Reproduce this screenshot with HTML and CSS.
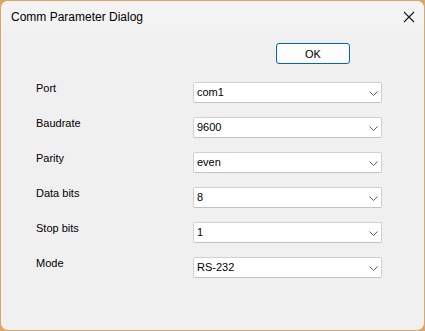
FILE: index.html
```html
<!doctype html>
<html>
<head>
    <title>Comm Parameter Dialog</title>
    <meta charset="utf-8"/>
    <link rel="stylesheet" href="styles.css">
</head>
<body>
    <div class="window">
        <div class="titlebar">
            <span class="title">Comm Parameter Dialog</span>
            <svg class="close" width="12" height="12" viewBox="0 0 12 12">
                <path d="M1 1 L11 11 M11 1 L1 11" stroke="#1a1a1a" stroke-width="1.1" fill="none"/>
            </svg>
        </div>
        <div class="content">
            <div class="okrow">
                <button class="ok">OK</button>
            </div>
            <div class="form">
                <label>Port</label>
                <div class="combo"><span>com1</span><svg class="chev" width="9" height="5" viewBox="0 0 9 5"><path d="M0.5 0.5 L4.5 4.5 L8.5 0.5" stroke="#606060" fill="none"/></svg></div>
                <label>Baudrate</label>
                <div class="combo"><span>9600</span><svg class="chev" width="9" height="5" viewBox="0 0 9 5"><path d="M0.5 0.5 L4.5 4.5 L8.5 0.5" stroke="#606060" fill="none"/></svg></div>
                <label>Parity</label>
                <div class="combo"><span>even</span><svg class="chev" width="9" height="5" viewBox="0 0 9 5"><path d="M0.5 0.5 L4.5 4.5 L8.5 0.5" stroke="#606060" fill="none"/></svg></div>
                <label>Data bits</label>
                <div class="combo"><span>8</span><svg class="chev" width="9" height="5" viewBox="0 0 9 5"><path d="M0.5 0.5 L4.5 4.5 L8.5 0.5" stroke="#606060" fill="none"/></svg></div>
                <label>Stop bits</label>
                <div class="combo"><span>1</span><svg class="chev" width="9" height="5" viewBox="0 0 9 5"><path d="M0.5 0.5 L4.5 4.5 L8.5 0.5" stroke="#606060" fill="none"/></svg></div>
                <label>Mode</label>
                <div class="combo"><span>RS-232</span><svg class="chev" width="9" height="5" viewBox="0 0 9 5"><path d="M0.5 0.5 L4.5 4.5 L8.5 0.5" stroke="#606060" fill="none"/></svg></div>
            </div>
        </div>
    </div>
</body>
</html>
```

FILE: styles.css
```css
body {
    margin: 0;
    background-color: #dba46c;
    font-family: "Liberation Sans", Arial, sans-serif;
    font-size: 11px;
    color: #000;
}
.window {
    margin: 1px;
    width: 423px;
    height: 329px;
    background-color: #f0f0f0;
    border-radius: 7px;
    overflow: hidden;
    display: flex;
    flex-direction: column;
}
.titlebar {
    height: 30px;
    background-color: #f3f3f3;
    display: flex;
    align-items: center;
    justify-content: space-between;
    padding: 0 9px 0 10px;
}
.title {
    font-family: "Liberation Sans", Arial, sans-serif;
    font-size: 12px;
    margin-top: 1px;
}
.close {
    margin-top: 1px;
}
.content {
    padding: 12px 0 0 35px;
}
.okrow {
    padding-left: 240px;
}
.ok {
    width: 74px;
    height: 21px;
    background-color: #fdfdfd;
    border: 1px solid #0067c0;
    border-radius: 3px;
    font-family: "Liberation Sans", Arial, sans-serif;
    font-size: 11px;
    color: #000;
    padding: 0;
}
.form {
    margin-top: 18px;
    display: grid;
    grid-template-columns: 157px 189px;
    row-gap: 14px;
}
.form label {
    line-height: 13px;
}
.combo {
    height: 21px;
    box-sizing: border-box;
    background-color: #fff;
    border: 1px solid #d0d0d0;
    border-bottom-color: #c2c2c2;
    border-radius: 2px;
    display: flex;
    align-items: center;
    justify-content: space-between;
    padding: 0 3px 0 3px;
    line-height: 13px;
}
.chev {
    margin-top: 1px;
}
```
